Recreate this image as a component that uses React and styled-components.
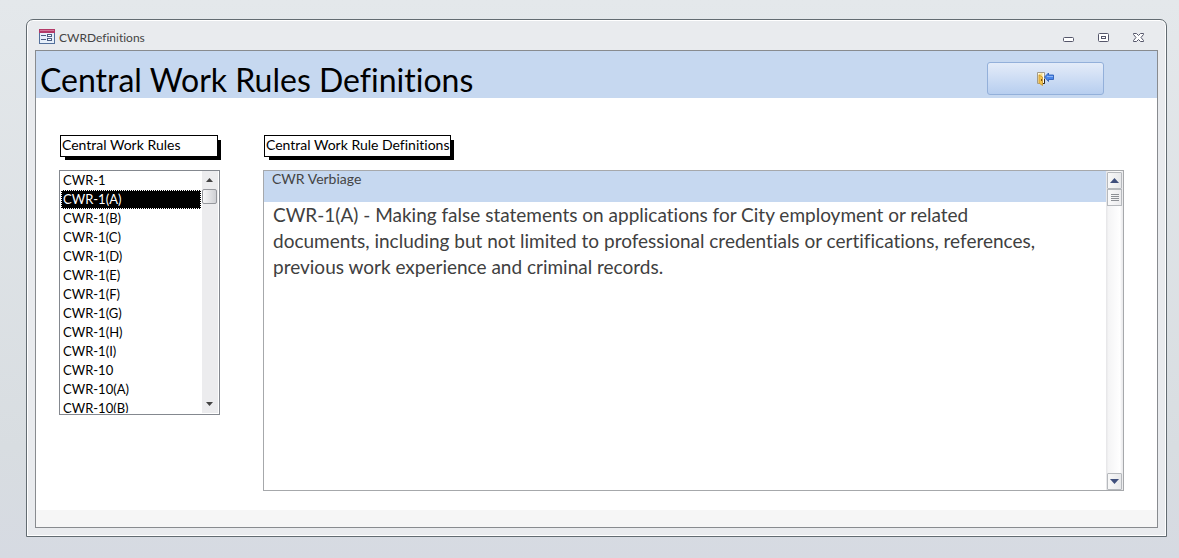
import { useState } from "react"
import styled, { createGlobalStyle } from "styled-components"

const GlobalStyle = createGlobalStyle`
    * {
        box-sizing: border-box;
    }
    body {
        margin: 0;
        font-family: Lato, "Liberation Sans", sans-serif;
        font-size: 14px;
        font-variant-ligatures: none;
        color: #000000;
    }
    button, select, textarea {
        font-family: inherit;
        font-variant-ligatures: none;
    }
`
const Desktop = styled.div`
    display: flex;
    min-height: 100vh;
    padding: 19px 12px 21px 26px;
    background: linear-gradient(#e4e8eb, #d8dde1 80%, #d6dae2);
`
const Window = styled.main`
    flex: 1;
    display: flex;
    flex-direction: column;
    min-width: 0;
    padding: 0 8px 8px;
    border: 1px solid #626b71;
    border-radius: 7px 7px 0 0;
    background-color: #e9ebee;
    box-shadow: inset 0 0 0 1px #ffffff;
`
const TitleBar = styled.header`
    display: flex;
    align-items: center;
    height: 30px;
    padding: 4px 10px 0 4px;
    color: #444444;
`
const Caption = styled.span`
    flex: 1;
    margin-left: 4px;
    font-size: 12px;
`
const WindowButtons = styled.div`
    display: flex;
    gap: 16px;
`
const WindowButton = styled.button`
    display: flex;
    justify-content: center;
    align-items: center;
    width: 19px;
    height: 19px;
    padding: 0;
    border: none;
    background: none;
`
const Form = styled.div`
    flex: 1;
    display: flex;
    flex-direction: column;
    border: 1px solid #888b8f;
    background-color: #ffffff;
`
const FormHeader = styled.div`
    display: flex;
    justify-content: space-between;
    align-items: center;
    height: 47px;
    padding: 0 53px 0 4px;
    background-color: #c6d8f0;
`
const Title = styled.h1`
    margin: 10px 0 0;
    font-size: 32px;
    font-weight: 400;
    line-height: 36px;
`
const ExitButton = styled.button`
    display: flex;
    justify-content: center;
    align-items: center;
    width: 117px;
    height: 33px;
    margin-top: 8px;
    padding: 0;
    border: 1px solid #93b0da;
    border-radius: 3px;
    background: linear-gradient(#e4ecf9, #b7ceef);
    cursor: pointer;
`
const Detail = styled.div`
    flex: 1;
    display: flex;
    gap: 43px;
    padding: 37px 33px 19px 23px;
`
const Rules = styled.section`
    width: 161px;
`
const Definitions = styled.section`
    flex: 1;
    display: flex;
    flex-direction: column;
    align-items: flex-start;
    min-width: 0;
`
const BoxLabel = styled.label`
    display: block;
    width: ${props => props.$width};
    height: 22px;
    margin: 0 1px 13px;
    padding: 0 1px;
    border: 1px solid #000000;
    background-color: #ffffff;
    box-shadow: 4px 4px 0 -1px #000000;
    line-height: 18px;
    white-space: nowrap;
`
const ListFrame = styled.div`
    display: flex;
    height: 245px;
    padding: 0 1px;
    border: 1px solid #84888f;
`
const RuleList = styled.select`
    flex: 1;
    min-width: 0;
    height: 242px;
    padding: 0;
    border: none;
    outline: none;
    overflow: hidden;
    font-size: 13px;
    background-color: #ffffff;
`
const Rule = styled.option`
    min-height: 19px;
    height: 19px;
    padding: 1px 2px 0;
    color: #000000;
    line-height: 19px;
    &:checked {
        background: linear-gradient(#000000, #000000);
        color: #ffffff;
        outline: 1px dotted #ffffff;
        outline-offset: -1px;
    }
`
const ListScroll = styled.div`
    display: flex;
    flex-direction: column;
    width: 16px;
    height: 242px;
    margin-left: 1px;
    padding-right: 1px;
    background-color: #ececee;
`
const ListArrow = styled.button`
    display: flex;
    justify-content: center;
    align-items: center;
    height: 18px;
    padding: 0;
    border: none;
    background: none;
`
const ListThumb = styled.div`
    height: 15px;
    margin-bottom: auto;
    border: 1px solid #95979c;
    border-radius: 2px;
    background: linear-gradient(to right, #f6f6f7, #cfd0d4);
`
const Subform = styled.div`
    align-self: stretch;
    flex: 1;
    display: flex;
    border: 1px solid #a6a8ab;
`
const Record = styled.div`
    flex: 1;
    display: flex;
    flex-direction: column;
    min-width: 0;
`
const FieldLabel = styled.label`
    height: 31px;
    padding: 0 8px;
    background-color: #c6d8f0;
    color: #444444;
    line-height: 16px;
`
const Verbiage = styled.textarea`
    flex: 1;
    width: 100%;
    padding: 0 50px 0 9px;
    border: none;
    outline: none;
    resize: none;
    overflow: hidden;
    color: #404040;
    font-size: 19px;
    line-height: 26px;
`
const PaneScroll = styled.div`
    display: flex;
    flex-direction: column;
    width: 17px;
    padding: 1px 1px 0;
    background: linear-gradient(to right, #e8e8ea 1px, #f4f4f5 2px, #ffffff 14px, #ececee 16px);
`
const PaneArrow = styled.button`
    display: flex;
    justify-content: center;
    align-items: center;
    height: 17px;
    padding: 0;
    border: 1px solid #b6b9bd;
    border-radius: 1px;
    background: linear-gradient(to right, #f8f8f8, #e8e9eb);
`
const PaneThumb = styled.div`
    display: flex;
    justify-content: center;
    align-items: center;
    height: 17px;
    margin-bottom: auto;
    border: 1px solid #b6b9bd;
    background: linear-gradient(to right, #fafafa, #ececee);
`
const FormFooter = styled.div`
    height: 17px;
    background-color: #f6f6f6;
`

const rules = [
    "CWR-1", "CWR-1(A)", "CWR-1(B)", "CWR-1(C)", "CWR-1(D)", "CWR-1(E)", "CWR-1(F)",
    "CWR-1(G)", "CWR-1(H)", "CWR-1(I)", "CWR-10", "CWR-10(A)", "CWR-10(B)",
]
const definitions = {
    "CWR-1(A)": "Making false statements on applications for City employment or related documents, including but not limited to professional credentials or certifications, references, previous work experience and criminal records.",
}

const FormIcon = () => (
    <svg width="16" height="16" viewBox="0 0 16 16" shapeRendering="crispEdges">
        <rect x="0" y="1" width="16" height="14" fill="#53709c" />
        <rect x="1" y="4" width="14" height="10" fill="#e6effa" />
        <rect x="0" y="0" width="16" height="4" fill="#b33a68" />
        <rect x="1" y="1" width="14" height="1" fill="#d27a9b" />
        <path d="M2 6.500h5M2 10.500h5" stroke="#4c5f83" />
        <path d="M8.500 5.500h4v2h-4zM8.500 9.500h4v2h-4z" fill="#ffffff" stroke="#4c5f83" />
    </svg>
)

const ExitIcon = () => (
    <svg width="17" height="16" viewBox="0 0 17 16">
        <path d="M.5 12.500V1.500h7v11z" fill="#fffdf0" stroke="#a39b88" />
        <path d="M7.500 8v4.500h-2" fill="none" stroke="#2a2622" />
        <path d="M1.500 3l4-1v0l0 12-4-2z" fill="#f7dc86" />
        <path d="M2 12V4l3.500 2v8.500z" fill="#f2c44e" stroke="#c8922a" strokeWidth=".8" />
        <path d="M4.500 8v2" stroke="#805410" />
        <path d="M7.500 6L11.500 2v2h5v4.500h-5v2z" fill="#4a86ea" stroke="#2556b0" strokeWidth=".8" />
        <path d="M10 5.500h6" stroke="#8db6f7" />
    </svg>
)

const Arrow = ({ down, size, color }) => (
    <svg width={size} height={size > 7 ? 5 : 4} viewBox="0 0 10 5" preserveAspectRatio="none">
        <path d={down ? "M0 0h10L5 5z" : "M0 5h10L5 0z"} fill={color} />
    </svg>
)

const App = () => {
    const [selected, setSelected] = useState("CWR-1(A)")

    return (
        <Desktop>
            <GlobalStyle />
            <Window>
                <TitleBar>
                    <FormIcon />
                    <Caption>CWRDefinitions</Caption>
                    <WindowButtons>
                        <WindowButton aria-label="Minimize">
                            <svg width="13" height="13" viewBox="0 0 13 13">
                                <rect x="1.500" y="6.500" width="10" height="4" rx="1" fill="#ffffff" stroke="#55566a" />
                            </svg>
                        </WindowButton>
                        <WindowButton aria-label="Restore">
                            <svg width="13" height="13" viewBox="0 0 13 13">
                                <rect x="1.500" y="2.500" width="10" height="8" rx="1" fill="#ffffff" stroke="#55566a" />
                                <rect x="4.500" y="5.500" width="4" height="2" fill="#ffffff" stroke="#55566a" />
                            </svg>
                        </WindowButton>
                        <WindowButton aria-label="Close">
                            <svg width="13" height="13" viewBox="0 0 13 13">
                                <path d="M1.500 2.500h3l2 2 2-2h3v1l-2.500 3 2.500 3v1h-3l-2-2-2 2h-3v-1l2.500-3-2.500-3z" fill="#ffffff" stroke="#55566a" />
                            </svg>
                        </WindowButton>
                    </WindowButtons>
                </TitleBar>
                <Form>
                    <FormHeader>
                        <Title>Central Work Rules Definitions</Title>
                        <ExitButton aria-label="Exit"><ExitIcon /></ExitButton>
                    </FormHeader>
                    <Detail>
                        <Rules>
                            <BoxLabel htmlFor="rules" $width="158px">Central Work Rules</BoxLabel>
                            <ListFrame>
                                <RuleList
                                    id="rules"
                                    size={13}
                                    value={selected}
                                    onChange={(e) => setSelected(e.target.value)}
                                >
                                    {rules.map((rule) => <Rule key={rule} value={rule}>{rule}</Rule>)}
                                </RuleList>
                                <ListScroll>
                                    <ListArrow aria-label="Scroll up"><Arrow size={7} color="#444444" /></ListArrow>
                                    <ListThumb />
                                    <ListArrow aria-label="Scroll down"><Arrow down size={7} color="#444444" /></ListArrow>
                                </ListScroll>
                            </ListFrame>
                        </Rules>
                        <Definitions>
                            <BoxLabel as="div" $width="187px">Central Work Rule Definitions</BoxLabel>
                            <Subform>
                                <Record>
                                    <FieldLabel htmlFor="verbiage">CWR Verbiage</FieldLabel>
                                    <Verbiage
                                        id="verbiage"
                                        readOnly
                                        value={definitions[selected] ? `${selected} - ${definitions[selected]}` : selected}
                                    />
                                </Record>
                                <PaneScroll>
                                    <PaneArrow aria-label="Scroll up"><Arrow size={9} color="#3f4f7c" /></PaneArrow>
                                    <PaneThumb>
                                        <svg width="8" height="8" viewBox="0 0 8 8" shapeRendering="crispEdges">
                                            <path d="M0 .5h8M0 2.500h8M0 4.500h8M0 6.500h8" stroke="#8d9095" />
                                        </svg>
                                    </PaneThumb>
                                    <PaneArrow aria-label="Scroll down"><Arrow down size={9} color="#3f4f7c" /></PaneArrow>
                                </PaneScroll>
                            </Subform>
                        </Definitions>
                    </Detail>
                    <FormFooter />
                </Form>
            </Window>
        </Desktop>
    )
}

export default App
